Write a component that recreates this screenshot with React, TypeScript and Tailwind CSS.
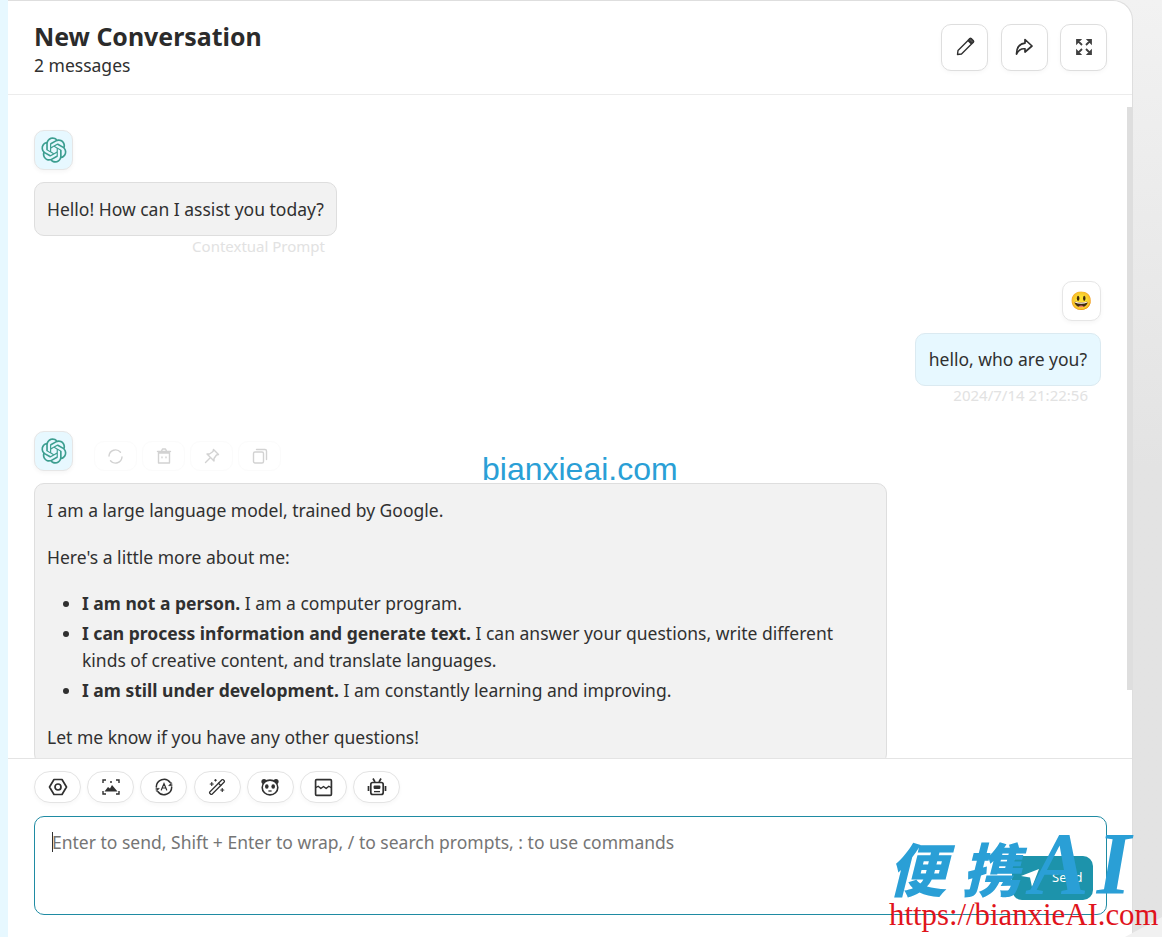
import React from 'react';
import { WandSparkles } from 'lucide-react';

const FONT = "font-['Noto_Sans','Open_Sans',sans-serif]";

const GptLogo: React.FC = () => (
  <svg width="26" height="26" viewBox="0 0 41 41" fill="#3c9e90">
    <path d="M37.5324 16.8707C37.9808 15.5241 38.1363 14.0974 37.9886 12.6859C37.8409 11.2744 37.3934 9.91076 36.676 8.68622C35.6126 6.83404 33.9882 5.3676 32.0373 4.4985C30.0864 3.62941 27.9098 3.40259 25.8215 3.85078C24.8796 2.7893 23.7219 1.94125 22.4257 1.36341C21.1295 0.785575 19.7249 0.491269 18.3058 0.500197C16.1708 0.495044 14.0893 1.16803 12.3614 2.42214C10.6335 3.67624 9.34853 5.44666 8.6917 7.47815C7.30085 7.76286 5.98686 8.3414 4.8377 9.17505C3.68854 10.0087 2.73073 11.0782 2.02839 12.312C0.956464 14.1591 0.498905 16.2988 0.721698 18.4228C0.944492 20.5467 1.83612 22.5449 3.268 24.1293C2.81966 25.4759 2.66413 26.9026 2.81182 28.3141C2.95951 29.7256 3.40701 31.0892 4.12437 32.3138C5.18791 34.1659 6.8123 35.6322 8.76321 36.5013C10.7141 37.3704 12.8907 37.5973 14.9789 37.1492C15.9208 38.2107 17.0786 39.0587 18.3747 39.6366C19.6709 40.2144 21.0755 40.5087 22.4946 40.4998C24.6307 40.5054 26.7133 39.8321 28.4418 38.5772C30.1704 37.3223 31.4556 35.5506 32.1119 33.5179C33.5027 33.2332 34.8167 32.6547 35.9659 31.821C37.115 30.9874 38.0728 29.9178 38.7752 28.684C39.8458 26.8371 40.3023 24.6979 40.0789 22.5748C39.8556 20.4517 38.9639 18.4544 37.5324 16.8707ZM22.4978 37.8849C20.7443 37.8874 19.0459 37.2733 17.6994 36.1501C17.7601 36.117 17.8666 36.0586 17.936 36.0161L25.9004 31.4156C26.1003 31.3019 26.2663 31.137 26.3813 30.9378C26.4964 30.7386 26.5563 30.5124 26.5549 30.2825V19.0542L29.9213 20.998C29.9389 21.0068 29.9541 21.0198 29.9656 21.0359C29.977 21.052 29.9842 21.0707 29.9867 21.0902V30.3889C29.9842 32.375 29.1946 34.2791 27.7909 35.6841C26.3872 37.0892 24.4838 37.8806 22.4978 37.8849ZM6.39227 31.0064C5.51397 29.4888 5.19742 27.7107 5.49804 25.9832C5.55718 26.0187 5.66048 26.0818 5.73461 26.1244L13.699 30.7248C13.8975 30.8408 14.1233 30.902 14.3532 30.902C14.583 30.902 14.8088 30.8408 15.0073 30.7248L24.731 25.1103V28.9979C24.7321 29.0177 24.7283 29.0376 24.7199 29.0556C24.7115 29.0736 24.6988 29.0893 24.6829 29.1012L16.6317 33.7497C14.9096 34.7416 12.8643 35.0097 10.9447 34.4954C9.02506 33.9811 7.38785 32.7263 6.39227 31.0064ZM4.29707 13.6194C5.17156 12.0998 6.55279 10.9364 8.19885 10.3327C8.19885 10.4013 8.19491 10.5228 8.19491 10.6071V19.808C8.19351 20.0378 8.25334 20.2638 8.36823 20.4629C8.48312 20.6619 8.64893 20.8267 8.84863 20.9404L18.5723 26.5542L15.206 28.4979C15.1894 28.5089 15.1703 28.5155 15.1505 28.5173C15.1307 28.5191 15.1107 28.516 15.0924 28.5082L7.04046 23.8557C5.32135 22.8601 4.06716 21.2235 3.55289 19.3046C3.03862 17.3858 3.30624 15.3413 4.29707 13.6194ZM31.955 20.0556L22.2312 14.4411L25.5976 12.4981C25.6142 12.4872 25.6333 12.4805 25.6531 12.4787C25.6729 12.4769 25.6928 12.4801 25.7111 12.4879L33.7631 17.1364C34.9967 17.849 36.0017 18.8982 36.6606 20.1613C37.3194 21.4244 37.6047 22.849 37.4832 24.2684C37.3617 25.6878 36.8382 27.0432 35.9743 28.1759C35.1103 29.3086 33.9415 30.1717 32.6047 30.6641C32.6047 30.5947 32.6047 30.4733 32.6047 30.3889V21.188C32.6066 20.9586 32.5474 20.7328 32.4332 20.5338C32.319 20.3348 32.154 20.1698 31.955 20.0556ZM35.3055 15.0128C35.2464 14.9765 35.1431 14.9142 35.069 14.8717L27.1045 10.2712C26.906 10.1554 26.6803 10.0943 26.4504 10.0943C26.2206 10.0943 25.9948 10.1554 25.7963 10.2712L16.0726 15.8858V11.9982C16.0715 11.9783 16.0753 11.9585 16.0837 11.9405C16.0921 11.9225 16.1048 11.9068 16.1207 11.8949L24.1719 7.25025C25.4053 6.53903 26.8158 6.19376 28.2383 6.25482C29.6608 6.31589 31.0364 6.78077 32.2044 7.59508C33.3723 8.40939 34.2842 9.53945 34.8334 10.8531C35.3826 12.1667 35.5464 13.6095 35.3055 15.0128ZM14.2424 21.9419L10.8752 19.9981C10.8576 19.9893 10.8423 19.9763 10.8309 19.9602C10.8195 19.9441 10.8122 19.9254 10.8098 19.9058V10.6071C10.8107 9.18295 11.2173 7.78848 11.9819 6.58696C12.7466 5.38544 13.8377 4.42659 15.1275 3.82264C16.4173 3.21869 17.8524 2.99464 19.2649 3.1767C20.6775 3.35876 22.0089 3.93941 23.1034 4.85067C23.0427 4.88379 22.937 4.94215 22.8668 4.98473L14.9024 9.58517C14.7025 9.69878 14.5366 9.86356 14.4215 10.0626C14.3065 10.2616 14.2466 10.4877 14.2479 10.7175L14.2424 21.9419ZM16.071 17.9991L20.4018 15.4978L24.7325 17.9975V22.9985L20.4018 25.4983L16.071 22.9985V17.9991Z" />
  </svg>
);

const Avatar: React.FC<{ children: React.ReactNode; tint?: boolean }> = ({ children, tint }) => (
  <div className={`w-[39px] h-[40px] rounded-[10px] border border-[#e6e6e6] shadow-[0_2px_4px_rgba(0,0,0,0.04)] flex items-center justify-center ${tint ? 'bg-[#e7f8ff]' : 'bg-white'}`}>
    {children}
  </div>
);

// header buttons
const HeaderButton: React.FC<{ children: React.ReactNode }> = ({ children }) => (
  <button className="w-[47px] h-[47px] rounded-[10px] border border-[#dedede] bg-white shadow-[0_2px_4px_rgba(0,0,0,0.03)] flex items-center justify-center text-[#303030]">
    {children}
  </button>
);

const PencilIcon = () => (
  <svg width="20" height="20" viewBox="0 0 20 20" fill="none" stroke="#303030" strokeWidth="1.4" strokeLinejoin="round">
    <path d="M2.5 17.5 L3 13.5 L13 3.5 L16.5 7 L6.5 17 Z" />
    <path d="M13.4 3 L14.8 1.6 Q15.5 1 16.2 1.6 L18.4 3.8 Q19 4.5 18.4 5.2 L17 6.6 Z" fill="#555555" />
  </svg>
);

const ShareIcon = () => (
  <svg width="20" height="20" viewBox="0 0 20 20" fill="none" stroke="#303030" strokeWidth="1.7" strokeLinejoin="round" strokeLinecap="round">
    <path d="M11 2.5 L18 9 L11 15 L11 11.8 C7.5 11.4 4.5 13 2.5 17 C2.5 11 5.5 6.8 11 6.2 Z" />
  </svg>
);

const MaxIcon = () => (
  <svg width="20" height="20" viewBox="0 0 20 20" fill="#404040" stroke="#404040" strokeWidth="1.8">
    <path d="M3 3 H6 L3 6 Z M3 3 L8 8" />
    <path d="M17 3 H14 L17 6 Z M17 3 L12 8" />
    <path d="M3 17 H6 L3 14 Z M3 17 L8 12" />
    <path d="M17 17 H14 L17 14 Z M17 17 L12 12" />
  </svg>
);

const SettingsIcon = () => (
  <svg width="20" height="20" viewBox="0 0 20 20" fill="none" stroke="#303030" strokeWidth="1.7" strokeLinejoin="round">
    <path d="M1.5 10 L6 2.5 H14 L18.5 10 L14 17.5 H6 Z" />
    <circle cx="10" cy="10" r="3" />
  </svg>
);

const ImageIcon = () => (
  <svg width="18" height="18" viewBox="0 0 18 18" fill="none" stroke="#303030" strokeWidth="1.4">
    <path d="M1 5 V2 H4 M14 2 H17 V5 M17 13 V16 H14 M4 16 H1 V13" />
    <path d="M2.5 13.5 L6 9 L8 10.5 L10 7 L15.5 13.5 Z" fill="#303030" stroke="none" />
    <circle cx="9" cy="4" r="1" fill="#303030" stroke="none" />
  </svg>
);

const AutoIcon = () => (
  <svg width="20" height="20" viewBox="0 0 20 20" fill="none" stroke="#303030" strokeWidth="1.5" strokeLinecap="round">
    <path d="M2.3 10 A7.7 7.7 0 0 1 16.2 5.5" />
    <path d="M17.7 10 A7.7 7.7 0 0 1 3.8 14.5" />
    <path d="M17.8 8.7 L14.6 8.7 L17.3 5.7 Z" fill="#303030" strokeWidth="0.5" />
    <path d="M2.2 11.3 L5.4 11.3 L2.7 14.3 Z" fill="#303030" strokeWidth="0.5" />
    <path d="M7.3 13 L10 6.6 L12.7 13 M8.3 11 H11.7" strokeWidth="1.2" />
  </svg>
);

const PandaIcon = () => (
  <svg width="20" height="20" viewBox="0 0 20 20" fill="none" stroke="#303030" strokeWidth="1.6">
    <circle cx="4" cy="4.5" r="2.6" fill="#303030" stroke="none" />
    <circle cx="16" cy="4.5" r="2.6" fill="#303030" stroke="none" />
    <ellipse cx="10" cy="10.5" rx="7.8" ry="7.4" fill="#fff" />
    <ellipse cx="6.8" cy="9.5" rx="1.8" ry="2.2" fill="#303030" stroke="none" />
    <ellipse cx="13.2" cy="9.5" rx="1.8" ry="2.2" fill="#303030" stroke="none" />
    <path d="M8.4 14 H11.6" strokeWidth="1.3" />
  </svg>
);

const MaskIcon = () => (
  <svg width="19" height="19" viewBox="0 0 18 18" fill="none" stroke="#303030" strokeWidth="1.6" strokeLinejoin="round">
    <rect x="1.5" y="1.5" width="15" height="15" rx="1" />
    <path d="M1.5 9.2 L4 7.8 L6.5 10 L9 8 L11.5 10 L14 7.8 L16.5 9.2" strokeWidth="1.3" />
  </svg>
);

const RobotIcon = () => (
  <svg width="20" height="20" viewBox="0 0 20 20" fill="none" stroke="#303030" strokeWidth="1.7" strokeLinejoin="round">
    <path d="M6 1.5 L8 5 M14 1.5 L12 5" />
    <rect x="3.8" y="5.5" width="12.4" height="12" rx="2" />
    <rect x="6.6" y="8.5" width="6.8" height="3.6" fill="#303030" stroke="none" rx="1" />
    <path d="M1.5 9 V14 M18.5 9 V14" />
    <path d="M7 14.6 H13" strokeWidth="1.3" />
  </svg>
);

const ToolButton: React.FC<{ children: React.ReactNode }> = ({ children }) => (
  <button className="w-[47px] h-[32px] rounded-[20px] border border-[#e4e4e4] bg-white shadow-[0_2px_4px_rgba(0,0,0,0.03)] flex items-center justify-center">
    {children}
  </button>
);

const faintIcon = { fill: 'none', stroke: '#d2d2d2', strokeWidth: 1.4, strokeLinejoin: 'round', strokeLinecap: 'round' } as const;

const FaintActions = () => (
  <div className="flex gap-[5px] ml-[21px] mt-[10px]">
    <span className="w-[43px] h-[30px] rounded-[10px] border border-[#fbfbfb] flex items-center justify-center">
      <svg width="17" height="17" viewBox="0 0 17 17" {...faintIcon}>
        <path d="M2 8 A6.5 6.5 0 0 1 13.5 4.3" />
        <path d="M15 9 A6.5 6.5 0 0 1 3.5 12.7" />
      </svg>
    </span>
    <span className="w-[43px] h-[30px] rounded-[10px] border border-[#fbfbfb] flex items-center justify-center">
      <svg width="16" height="16" viewBox="0 0 16 16" {...faintIcon}>
        <path d="M2.5 5 H13.5 V15 H2.5 Z M1.5 3.5 H14.5 M5.5 3 L6.5 1 H9.5 L10.5 3" />
        <path d="M6 9 V9.8 M10 9 V9.8" />
      </svg>
    </span>
    <span className="w-[43px] h-[30px] rounded-[10px] border border-[#fbfbfb] flex items-center justify-center">
      <svg width="16" height="16" viewBox="0 0 16 16" {...faintIcon}>
        <path d="M9.5 1.5 L14.5 6.5 L12.5 7 L10 10.5 L10 13 L3 6 L5.5 6 L9 3.5 Z M6 10 L1.5 14.5" />
      </svg>
    </span>
    <span className="w-[43px] h-[30px] rounded-[10px] border border-[#fbfbfb] flex items-center justify-center">
      <svg width="16" height="16" viewBox="0 0 16 16" {...faintIcon}>
        <rect x="1.5" y="4" width="10" height="11" rx="1.5" />
        <path d="M4.5 1.5 H13 A1.5 1.5 0 0 1 14.5 3 V11.5" />
      </svg>
    </span>
  </div>
);

const App: React.FC = () => {
  return (
    <div className={`${FONT} relative flex w-[1162px] h-[937px] overflow-hidden bg-gradient-to-b from-[#f2f2f2] via-[#e3e3e3] to-[#e3e3e3] text-[#303030]`}>
      <div className="w-[8px] shrink-0 bg-[#e7f8ff]" />

      <main className="w-[1125px] shrink-0 h-full bg-white border-t border-r border-[#dedede] rounded-tr-[20px] flex flex-col relative">
        <header className="h-[94px] shrink-0 border-b border-[#ececec] pl-[26px] pr-[25px] flex items-center justify-between">
          <div className="-mt-[1px]">
            <h1 className="text-[24.9px] leading-[36px] font-bold text-[#2b2b2b]">New Conversation</h1>
            <p className="text-[17.5px] leading-[22px] text-[#303030]">2 messages</p>
          </div>
          <div className="flex gap-[12.5px] -mt-[1px]">
            <HeaderButton><PencilIcon /></HeaderButton>
            <HeaderButton><ShareIcon /></HeaderButton>
            <HeaderButton><MaxIcon /></HeaderButton>
          </div>
        </header>

        {/* message list, last bubble runs under the action bar */}
        <div className="flex-1 min-h-0 overflow-hidden pl-[26px] pr-[31px] pt-[35px] relative">
          <div className="flex flex-col items-start">
            <Avatar tint><GptLogo /></Avatar>
            <div className="mt-[12px] px-[12px] py-[12px] rounded-[10px] border border-[#dedede] bg-[#f2f2f2] text-[17.5px] leading-[28px]">
              Hello! How can I assist you today?
            </div>
            <div className="w-[303px] text-right pr-[12px] text-[15px] leading-[20px] text-[#e2e2e2]">Contextual Prompt</div>
          </div>

          <div className="flex flex-col items-end mt-[25px]">
            <Avatar><span className="text-[18px] leading-none font-['Noto_Color_Emoji','Noto_Sans',sans-serif]">😃</span></Avatar>
            <div className="mt-[12px] px-[13px] py-[12px] rounded-[10px] border border-[#dbeaf1] bg-[#e7f8ff] text-[17.5px] leading-[27px]">
              hello, who are you?
            </div>
            <div className="pr-[13px] text-[15px] leading-[18px] text-[#e2e2e2]">2024/7/14 21:22:56</div>
          </div>

          <div className="flex flex-col items-start mt-[27px]">
            <div className="flex items-start">
              <Avatar tint><GptLogo /></Avatar>
              <FaintActions />
            </div>
            <div className="mt-[12px] w-[853px] px-[12px] pt-[13px] pb-[12px] rounded-[10px] border border-[#dedede] bg-[#f2f2f2] text-[17.5px] leading-[27px]">
              <p>I am a large language model, trained by Google.</p>
              <p className="mt-[20px]">Here's a little more about me:</p>
              <ul className="mt-[18.5px] pl-[35px] list-disc">
                <li className="mb-[3px]"><strong>I am not a person.</strong> I am a computer program.</li>
                <li className="mb-[3px]"><strong>I can process information and generate text.</strong> I can answer your questions, write different kinds of creative content, and translate languages.</li>
                <li><strong>I am still under development.</strong> I am constantly learning and improving.</li>
              </ul>
              <p className="mt-[20px]">Let me know if you have any other questions!</p>
            </div>
          </div>

          {/* scrollbar */}
          <div className="absolute top-[12px] right-0 w-[5px] h-[583px] bg-[#dedede]" />
        </div>

        <div className="shrink-0 h-[179px] bg-white border-t border-[#e4e4e4] pl-[26px] pr-[25px] pt-[12px]">
          <div className="flex gap-[6.2px]">
            <ToolButton><SettingsIcon /></ToolButton>
            <ToolButton><ImageIcon /></ToolButton>
            <ToolButton><AutoIcon /></ToolButton>
            <ToolButton><WandSparkles size={18} strokeWidth={1.6} color="#303030" /></ToolButton>
            <ToolButton><PandaIcon /></ToolButton>
            <ToolButton><MaskIcon /></ToolButton>
            <ToolButton><RobotIcon /></ToolButton>
          </div>
          <div className="mt-[13px] h-[99px] rounded-[10px] border border-[#1f8ba3] bg-white pl-[17px] pr-[14px] pt-[13px] flex">
            <span className="w-px h-[20px] bg-[#303030] mt-[2px] -mr-px shrink-0" />
            <span className="text-[17.5px] leading-[24px] text-[#757575]">Enter to send, Shift + Enter to wrap, / to search prompts, : to use commands</span>
            <button className="absolute left-[1004px] top-[855px] w-[81px] h-[44px] rounded-[10px] bg-[#1d93ab] text-white text-[13px] flex items-center pl-[8px] gap-[12px]">
              <svg width="20" height="20" viewBox="0 0 20 20" fill="#fff"><path d="M1 8 L19 1 L12 19 L10 9.5 Z" /></svg>
              <span>Send</span>
            </button>
          </div>
        </div>
      </main>

      {/* lighter wedge in the bottom right corner */}
      <svg className="absolute right-0 bottom-0" width="37" height="20" viewBox="0 0 37 20">
        <path d="M0 20 L37 0 V20 Z" fill="#f1f1f1" />
      </svg>

      {/* watermarks */}
      <div className="absolute left-[482px] top-[451px] font-['Liberation_Sans',sans-serif] text-[32px] leading-[36px] text-[#2a9fd6]">bianxieai.com</div>
      <div className="absolute left-[888px] top-[832px] font-['Noto_Sans_CJK_SC',sans-serif] font-black italic text-[58px] leading-[70px] tracking-[16px] text-[#2a9fd6] whitespace-nowrap">便携</div>
      <div className="absolute left-[1030px] top-[814px] font-['Liberation_Serif',serif] font-bold italic text-[88px] leading-[100px] tracking-[8px] text-[#2a9fd6] whitespace-nowrap">AI</div>
      <div className="absolute left-[889px] top-[896px] font-['Liberation_Serif',serif] text-[30.8px] leading-[38px] text-[#e0141c] whitespace-nowrap">https://bianxieAI.com</div>
    </div>
  );
};

export default App;
